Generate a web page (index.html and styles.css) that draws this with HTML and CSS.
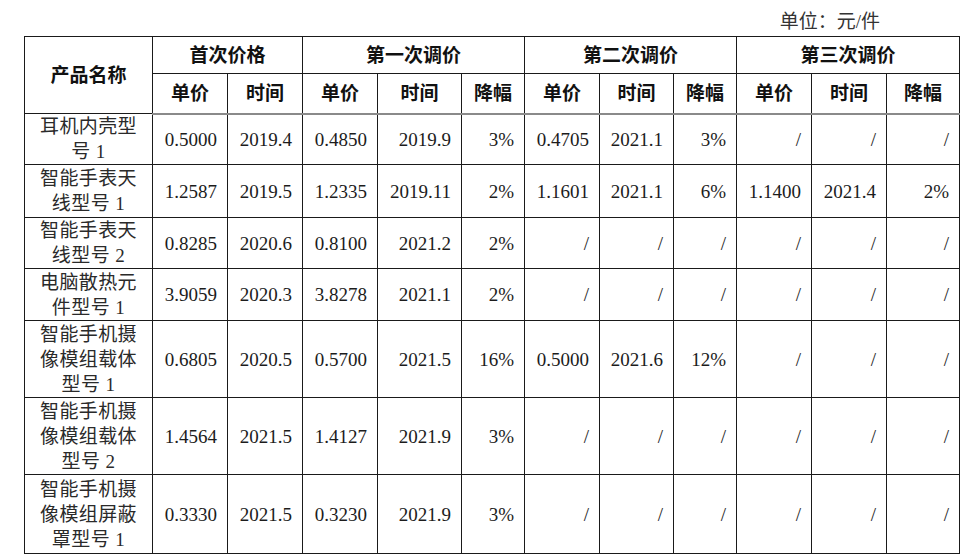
FILE: index.html
```html
<!DOCTYPE html>
<html lang="zh">
<head>
<meta charset="utf-8">
<title>调价表</title>
<link rel="stylesheet" href="styles.css">
</head>
<body>
<div class="page">
  <div class="unit">单位：元/件</div>
  <table class="price">
    <colgroup>
      <col class="c-name">
      <col class="c75"><col class="c75">
      <col class="c75"><col class="c84"><col class="c63">
      <col class="c75"><col class="c74"><col class="c63">
      <col class="c75"><col class="c75"><col class="c73">
    </colgroup>
    <thead>
      <tr class="h1">
        <th rowspan="2">产品名称</th>
        <th colspan="2">首次价格</th>
        <th colspan="3">第一次调价</th>
        <th colspan="3">第二次调价</th>
        <th colspan="3">第三次调价</th>
      </tr>
      <tr class="h2">
        <th>单价</th><th>时间</th>
        <th>单价</th><th>时间</th><th>降幅</th>
        <th>单价</th><th>时间</th><th>降幅</th>
        <th>单价</th><th>时间</th><th>降幅</th>
      </tr>
    </thead>
    <tbody>
      <tr class="r51">
        <td class="name">耳机内壳型<br>号 1</td>
        <td>0.5000</td><td>2019.4</td>
        <td>0.4850</td><td>2019.9</td><td>3%</td>
        <td>0.4705</td><td>2021.1</td><td>3%</td>
        <td>/</td><td>/</td><td>/</td>
      </tr>
      <tr class="r53">
        <td class="name">智能手表天<br>线型号 1</td>
        <td>1.2587</td><td>2019.5</td>
        <td>1.2335</td><td>2019.11</td><td>2%</td>
        <td>1.1601</td><td>2021.1</td><td>6%</td>
        <td>1.1400</td><td>2021.4</td><td>2%</td>
      </tr>
      <tr class="r51">
        <td class="name">智能手表天<br>线型号 2</td>
        <td>0.8285</td><td>2020.6</td>
        <td>0.8100</td><td>2021.2</td><td>2%</td>
        <td>/</td><td>/</td><td>/</td>
        <td>/</td><td>/</td><td>/</td>
      </tr>
      <tr class="r52">
        <td class="name">电脑散热元<br>件型号 1</td>
        <td>3.9059</td><td>2020.3</td>
        <td>3.8278</td><td>2021.1</td><td>2%</td>
        <td>/</td><td>/</td><td>/</td>
        <td>/</td><td>/</td><td>/</td>
      </tr>
      <tr class="r77">
        <td class="name">智能手机摄<br>像模组载体<br>型号 1</td>
        <td>0.6805</td><td>2020.5</td>
        <td>0.5700</td><td>2021.5</td><td>16%</td>
        <td>0.5000</td><td>2021.6</td><td>12%</td>
        <td>/</td><td>/</td><td>/</td>
      </tr>
      <tr class="r77">
        <td class="name">智能手机摄<br>像模组载体<br>型号 2</td>
        <td>1.4564</td><td>2021.5</td>
        <td>1.4127</td><td>2021.9</td><td>3%</td>
        <td>/</td><td>/</td><td>/</td>
        <td>/</td><td>/</td><td>/</td>
      </tr>
      <tr class="r79">
        <td class="name">智能手机摄<br>像模组屏蔽<br>罩型号 1</td>
        <td>0.3330</td><td>2021.5</td>
        <td>0.3230</td><td>2021.9</td><td>3%</td>
        <td>/</td><td>/</td><td>/</td>
        <td>/</td><td>/</td><td>/</td>
      </tr>
    </tbody>
  </table>
</div>
</body>
</html>
```

FILE: styles.css
```css
html, body {
  margin: 0;
  padding: 0;
  background: #ffffff;
}

body {
  font-family: "Liberation Serif", "Noto Sans CJK SC", serif;
  color: #1c1c1c;
}

.page {
  width: 935px;
  padding-left: 24px;
}

.unit {
  height: 28px;
  padding-top: 8px;
  line-height: 28px;
  font-size: 19px;
  text-align: right;
  padding-right: 79px;
  color: #333333;
}

.price {
  width: 935px;
  table-layout: fixed;
  border-collapse: collapse;
  font-size: 19px;
  border-top: 1px solid #6e6e6e;
  border-left: 1px solid #6e6e6e;
  border-right: 1px solid #111111;
  border-bottom: 1px solid #555555;
}

.c-name { width: 128px; }
.c75 { width: 75px; }
.c84 { width: 84px; }
.c63 { width: 63px; }
.c74 { width: 74px; }
.c73 { width: 73px; }

.price th,
.price td {
  border: 1px solid #1a1a1a;
  padding: 0 10px 0 4px;
  line-height: 25px;
  white-space: nowrap;
}

.price th {
  font-weight: bold;
  text-align: center;
  padding: 0;
  color: #111111;
}

.price td {
  text-align: right;
  vertical-align: middle;
}

.price td.name {
  text-align: center;
  padding: 0;
  letter-spacing: 0.4px;
  color: #2a2a2a;
}

.h1 { height: 37px; }
.h2 { height: 40px; }
.h2 th { border-bottom: 2px solid #8a8a8a; }

.r51 { height: 51px; }
.r52 { height: 52px; }
.r53 { height: 53px; }
.r77 { height: 77px; }
.r79 { height: 79px; }
```
